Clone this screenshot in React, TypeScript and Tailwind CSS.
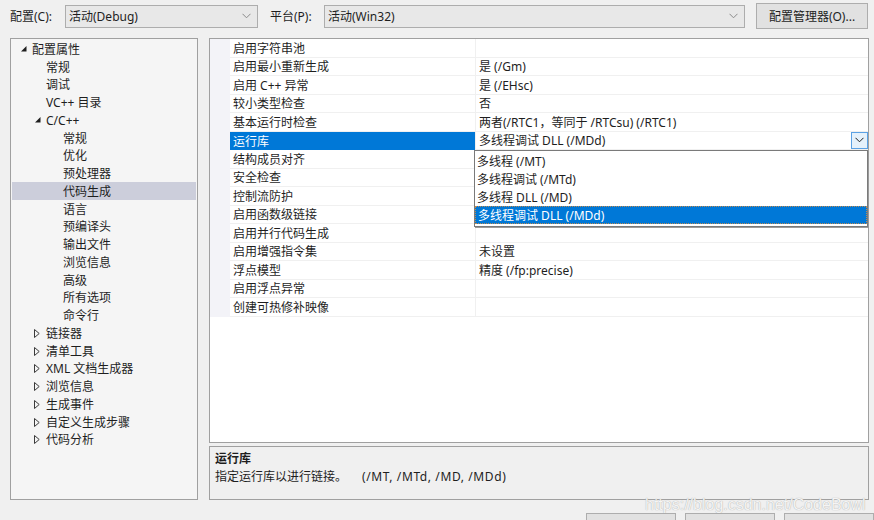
import React from 'react';

type TreeItem = { t: string; lvl: number; exp?: 'open' | 'closed'; sel?: boolean };

const tree: TreeItem[] = [
  { t: '配置属性', lvl: 0, exp: 'open' },
  { t: '常规', lvl: 1 },
  { t: '调试', lvl: 1 },
  { t: 'VC++ 目录', lvl: 1 },
  { t: 'C/C++', lvl: 1, exp: 'open' },
  { t: '常规', lvl: 2 },
  { t: '优化', lvl: 2 },
  { t: '预处理器', lvl: 2 },
  { t: '代码生成', lvl: 2, sel: true },
  { t: '语言', lvl: 2 },
  { t: '预编译头', lvl: 2 },
  { t: '输出文件', lvl: 2 },
  { t: '浏览信息', lvl: 2 },
  { t: '高级', lvl: 2 },
  { t: '所有选项', lvl: 2 },
  { t: '命令行', lvl: 2 },
  { t: '链接器', lvl: 1, exp: 'closed' },
  { t: '清单工具', lvl: 1, exp: 'closed' },
  { t: 'XML 文档生成器', lvl: 1, exp: 'closed' },
  { t: '浏览信息', lvl: 1, exp: 'closed' },
  { t: '生成事件', lvl: 1, exp: 'closed' },
  { t: '自定义生成步骤', lvl: 1, exp: 'closed' },
  { t: '代码分析', lvl: 1, exp: 'closed' },
];

const rows: [string, string][] = [
  ['启用字符串池', ''],
  ['启用最小重新生成', '是 (/Gm)'],
  ['启用 C++ 异常', '是 (/EHsc)'],
  ['较小类型检查', '否'],
  ['基本运行时检查', '两者(/RTC1，等同于 /RTCsu) (/RTC1)'],
  ['运行库', '多线程调试 DLL (/MDd)'],
  ['结构成员对齐', ''],
  ['安全检查', ''],
  ['控制流防护', ''],
  ['启用函数级链接', ''],
  ['启用并行代码生成', ''],
  ['启用增强指令集', '未设置'],
  ['浮点模型', '精度 (/fp:precise)'],
  ['启用浮点异常', ''],
  ['创建可热修补映像', ''],
];

const options = ['多线程 (/MT)', '多线程调试 (/MTd)', '多线程 DLL (/MD)', '多线程调试 DLL (/MDd)'];

function Chevron({ color = '#8a8a8a' }: { color?: string }) {
  return (
    <svg width="9" height="6" viewBox="0 0 9 6">
      <polyline points="0.5,0.8 4.5,4.8 8.5,0.8" fill="none" stroke={color} strokeWidth="1" />
    </svg>
  );
}

function Tri({ open }: { open: boolean }) {
  return open ? (
    <svg width="6" height="6" viewBox="0 0 6 6">
      <polygon points="5.5,0 5.5,5.5 0,5.5" fill="#1e1e1e" />
    </svg>
  ) : (
    <svg width="6" height="9" viewBox="0 0 6 9" className="-ml-[1px]">
      <polygon points="0.5,0.5 5.2,4.5 0.5,8.5" fill="none" stroke="#3a3a3a" strokeWidth="1" />
    </svg>
  );
}

const padFor = ['pl-[9px]', 'pl-[23px]', 'pl-[40px]'];

export default function App() {
  return (
    <div className="relative w-[874px] h-[520px] overflow-hidden bg-[#f0f0f0] text-[12px] text-[#1e1e1e] font-['Noto_Sans','Noto_Sans_CJK_SC',sans-serif]">
      {/* top bar */}
      <div className="flex h-[38px] items-start pl-[10px] pt-[3px]">
        <div className="flex h-[26px] items-center">
          <span className="w-[55px] pt-[2px] leading-[16px]">配置(C):</span>
          <div className="flex h-[23px] w-[193px] items-center justify-between border border-[#adadad] bg-[#e8e8e8] pl-[3px] pr-[6px]">
            <span className="pt-[2px]">活动(Debug)</span>
            <Chevron />
          </div>
          <span className="ml-[12px] w-[54px] pt-[2px] leading-[16px]">平台(P):</span>
          <div className="flex h-[23px] w-[421px] items-center justify-between border border-[#adadad] bg-[#e8e8e8] pl-[3px] pr-[6px]">
            <span className="pt-[2px]">活动(Win32)</span>
            <Chevron />
          </div>
          <div className="ml-[11px] flex h-[26px] w-[112px] items-center justify-center border border-[#adadad] bg-[#e1e1e1] pt-[2px]">
            配置管理器(O)...
          </div>
        </div>
      </div>

      {/* main */}
      <div className="flex h-[462px] pl-[10px]">
        {/* tree */}
        <div className="h-full w-[188px] border border-[#a0a0a0] bg-[#f5f5f5] pt-[1px] px-[1px]">
          {tree.map((it, i) => (
            <div
              key={i}
              className={`flex h-[17.75px] items-center ${padFor[it.lvl]} ${it.sel ? 'bg-[#cccedb]' : ''}`}
            >
              <span className="flex w-[11px] items-center pt-[1px]">
                {it.exp ? <Tri open={it.exp === 'open'} /> : null}
              </span>
              <span className="whitespace-nowrap pt-[2px] leading-[16px]">{it.t}</span>
            </div>
          ))}
        </div>

        {/* right column */}
        <div className="ml-[11px] flex w-[660px] flex-col">
          <div className="relative h-[405px] border border-[#a0a0a0] bg-white">
            {rows.map(([n, v], i) => {
              const sel = i === 5;
              return (
                <div key={i} className="flex h-[18.5px]">
                  <div className="w-[20px] bg-[#f3f3f8]" />
                  <div
                    className={`flex w-[245px] items-center pl-[3px] pt-[2px] whitespace-nowrap ${
                      sel ? 'bg-[#0078d7] text-white' : 'border-b border-[#f0f0f0]'
                    }`}
                  >
                    {n}
                  </div>
                  <div className="w-[1px] bg-[#f0f0f0]" />
                  <div className="flex w-[392px] items-center border-b border-[#f0f0f0] whitespace-nowrap">
                    {sel ? (
                      <div className="flex h-full w-full items-center justify-between pl-[3px]">
                        <span className="pt-[2px]">{v}</span>
                        <div className="flex h-full w-[17px] items-center justify-center border border-[#5ba1e4] bg-[#e5f1fb]">
                          <Chevron color="#1e1e1e" />
                        </div>
                      </div>
                    ) : (
                      <span className="pl-[3px] pt-[2px]">{v}</span>
                    )}
                  </div>
                </div>
              );
            })}

            {/* dropdown list */}
            <div className="absolute left-[264px] top-[111px] w-[394px] h-[77px] border border-[#7a7a7a] bg-white shadow-[1px_1px_0_#9a9a9a] pt-[1px]">
              {options.map((o, i) => (
                <div
                  key={i}
                  className={`flex h-[18px] items-center pl-[2px] pt-[2px] whitespace-nowrap ${
                    i === 3 ? 'bg-[#0078d7] text-white border border-dotted border-[#c08a50]' : ''
                  }`}
                >
                  {o}
                </div>
              ))}
            </div>
          </div>

          <div className="mt-[3px] h-[54px] border border-[#a0a0a0] bg-[#f0f0f0] pl-[5px] pt-[2px]">
            <div className="h-[18px] pt-[1px] font-bold leading-[18px]">运行库</div>
            <div className="flex h-[18px] items-center pt-[2px] leading-[18px] whitespace-nowrap">
              <span className="w-[147px]">指定运行库以进行链接。</span>
              <span className="tracking-[0.6px]">(/MT, /MTd, /MD, /MDd)</span>
            </div>
          </div>
        </div>
      </div>

      {/* bottom buttons */}
      <div className="mt-[13px] flex justify-end gap-[9px]">
        <div className="h-[24px] w-[90px] border border-[#adadad] bg-[#e1e1e1]" />
        <div className="h-[24px] w-[90px] border border-[#adadad] bg-[#e1e1e1]" />
        <div className="h-[24px] w-[90px] border border-[#adadad] bg-[#e1e1e1]" />
      </div>

      {/* watermark */}
      <div className="absolute left-[645px] top-[496px] text-[16px] leading-[18px] text-[#f4f4f4] [text-shadow:0_0_1px_#9a9a9a] font-['Liberation_Sans',sans-serif]">
        https://blog.csdn.net/CodeBowl
      </div>
    </div>
  );
}
